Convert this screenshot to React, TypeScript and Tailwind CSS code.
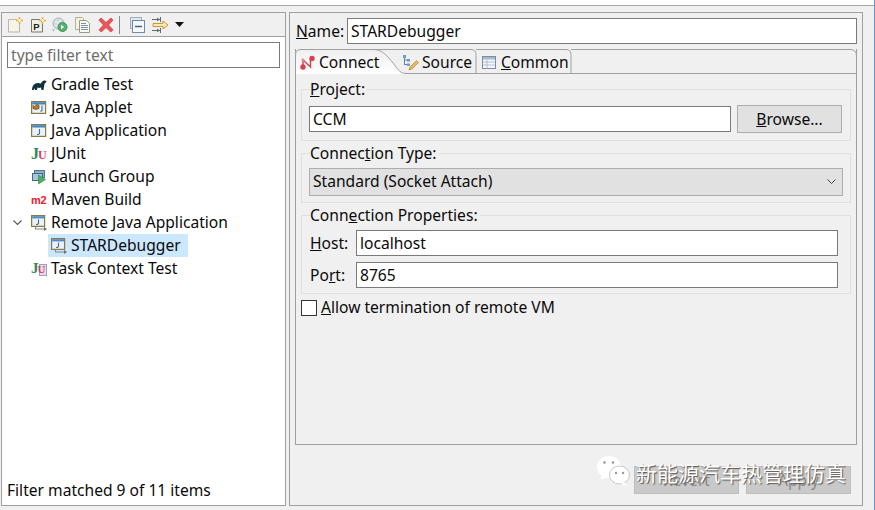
import React from 'react';

const Ico: React.FC<{ children: React.ReactNode; className?: string }> = ({ children, className }) => (
  <svg width="16" height="16" viewBox="0 0 16 16" fill="none" className={`shrink-0 ${className ?? ''}`}>
    {children}
  </svg>
);

const NewConfig = () => (
  <Ico>
    <path d="M0.500 2.500h8l3 3v9.500h-11z" fill="#f6f4e8" stroke="#b9b8a0" />
    <path d="M11.500 0v7M8 3.500h7" stroke="#e0b040" strokeWidth="1.600" />
    <path d="M11.500 2v3M10 3.500h3" stroke="#fff6d0" />
  </Ico>
);
const NewProto = () => (
  <Ico>
    <path d="M0.500 2.500h8l3 3v9.500h-11z" fill="#f0efe4" stroke="#77776a" />
    <text x="2.200" y="13" fontSize="9.500" fontWeight="700" fill="#222" fontFamily="Liberation Sans">P</text>
    <path d="M11.500 0v7M8 3.500h7" stroke="#e0b040" strokeWidth="1.600" />
    <path d="M11.500 2v3M10 3.500h3" stroke="#fff6d0" />
  </Ico>
);
const ExportCfg = () => (
  <Ico>
    <circle cx="6.500" cy="6.500" r="5.500" fill="#d4dce2" stroke="#a8b2b8" />
    <path d="M3 4l3 2 3-3M3 9l4-1 3 2" stroke="#f2f4f6" />
    <circle cx="10.500" cy="10" r="4.500" fill="#58b070" stroke="#3e9458" />
    <path d="M9 8v4.200l3.200-2.100z" fill="#fff" />
    <path d="M0 12h3l-1.500 3z" fill="#b4c2cc" />
  </Ico>
);
const Duplicate = () => (
  <Ico>
    <path d="M0.500 0.500h7l1 1v11h-8z" fill="#f6f2dc" stroke="#b4b094" />
    <path d="M4.500 3.500h7l3 3v9h-10z" fill="#fbfaf0" stroke="#9a9a86" />
    <path d="M6 6.500h5M6 8.500h7M6 10.500h7M6 12.500h7" stroke="#7a94ae" />
  </Ico>
);
const RedX = () => (
  <Ico>
    <path d="M3 1l5 4.500L13 1l2 2.200-4.500 4.800 4.500 4.800L12.800 15 8 10.500 3.200 15 1 12.800 5.500 8 1 3.200z" fill="#e8555a" stroke="#cf3f44" strokeWidth="0.800" />
  </Ico>
);
const Collapse = () => (
  <Ico>
    <rect x="0.500" y="0.500" width="11" height="11" fill="#dfe8f0" stroke="#9cb0c2" />
    <rect x="2.500" y="3.500" width="12" height="12" fill="#f4f8fb" stroke="#6e8aa4" />
    <path d="M5 9.500h7" stroke="#2f5f8a" strokeWidth="1.400" />
  </Ico>
);
const FilterArrow = () => (
  <svg width="17" height="16" viewBox="0 0 17 16" fill="none" className="shrink-0">
    <path d="M0 2.500h8M0 13.500h8M8.500 0v5M8.500 11v5" stroke="#5c6a72" />
    <path d="M5 1l2 1.500-2 1.500M5 12l2 1.500-2 1.500" stroke="#5c6a72" />
    <path d="M1 6.500h10V4l5 4-5 4V9.500H1z" fill="#fbe9b4" stroke="#c8983e" />
  </svg>
);

const GradleIcon = () => (
  <Ico>
    <path d="M1 13c0-4 2-7 6-7 1 0 2 .5 3 .5 1-2.500 3-3.500 5-2.500 1 .5 0 2-1 2-1 2-1 4-1.500 7h-2l-.5-2.500c-1 .5-2.500.5-3.500 0L6 13H4l-.5-2L2.800 13z" fill="#11343c" />
  </Ico>
);
const WindowIcon: React.FC<{ applet?: boolean }> = ({ applet }) => (
  <Ico>
    <rect x="0.600" y="1.600" width="14" height="11.800" fill="#eaf1f7" stroke="#8a7a48" strokeWidth="1.200" />
    <rect x="1.200" y="2.200" width="12.800" height="2.300" fill="#3f86c6" />
    {applet ? (
      <>
        <path d="M2 5.500c1 1.200 1.500 1.200 2.500 0s1.500-1.200 3.500 0v3c-2 1-4 1-6 0z" fill="#c07c24" stroke="#6e4410" strokeWidth="0.800" />
        <path d="M11 5.500v5l-1.500 1" stroke="#3f6e96" strokeWidth="1.100" />
      </>
    ) : (
      <path d="M8.500 6v4.500l-1 1H6" stroke="#3f6e96" strokeWidth="1.100" />
    )}
  </Ico>
);
const JUnitIcon = () => (
  <Ico>
    <text x="0" y="13" fontSize="16" fontWeight="700" fill="#2e8b57" fontFamily="Liberation Serif">J</text>
    <text x="7" y="13" fontSize="12" fontWeight="700" fill="#d8405a" fontFamily="Liberation Serif">U</text>
  </Ico>
);
const LaunchIcon = () => (
  <Ico>
    <rect x="3.500" y="1.500" width="10" height="7" fill="#8fb0c8" stroke="#4a7394" />
    <rect x="1.500" y="4.500" width="10" height="7" fill="#a9c4d8" stroke="#3f6a8c" />
    <path d="M7.500 6v9l7-4.500z" fill="#4fae62" stroke="#2f8a48" strokeWidth="0.600" />
  </Ico>
);
const MavenIcon = () => (
  <Ico>
    <text x="0" y="11.500" fontSize="11" fontWeight="700" fill="#ee2028" fontFamily="Liberation Sans" letterSpacing="-0.300">m2</text>
  </Ico>
);
const RemoteIcon = () => (
  <Ico>
    <rect x="0.600" y="0.600" width="13" height="10.800" fill="#eaf1f7" stroke="#8a7a48" strokeWidth="1.200" />
    <rect x="1.200" y="1.200" width="11.800" height="2.200" fill="#4d8cc6" />
    <path d="M7.500 4.500v4l-1 1H5" stroke="#3f6e96" strokeWidth="1.100" />
    <path d="M4.500 11.500v2.500h9" stroke="#8a8a7e" strokeWidth="1.200" />
    <path d="M13 12l3 2-3 2z" fill="#6e6e68" />
  </Ico>
);
const TaskIcon = () => (
  <Ico>
    <rect x="8.500" y="3.500" width="7" height="11" fill="#e2deee" stroke="#a59cc4" />
    <text x="0" y="12" fontSize="15" fontWeight="700" fill="#2e8b57" fontFamily="Liberation Serif">J</text>
    <text x="6.500" y="12" fontSize="11" fontWeight="700" fill="#d8405a" fontFamily="Liberation Serif">U</text>
  </Ico>
);

const ConnectIcon = () => (
  <Ico>
    <path d="M3 12V5l7.500 7V4" stroke="#c4525e" strokeWidth="1.500" />
    <circle cx="3" cy="12" r="2.700" fill="#d9404f" />
    <circle cx="12" cy="3.500" r="2.700" fill="#d9404f" />
    <circle cx="3" cy="5" r="1.600" fill="#e58d95" />
  </Ico>
);
const SourceIcon = () => (
  <Ico>
    <path d="M1.500 1v9M1.500 5h3M1.500 9.500h3" stroke="#5a86ac" />
    <rect x="0" y="0" width="3" height="3" fill="#6f9cc4" />
    <rect x="4" y="4" width="3" height="2.500" fill="#6f9cc4" />
    <rect x="4" y="8.500" width="3" height="2.500" fill="#6f9cc4" />
    <path d="M6 15l1-3 6.500-6.500 2 2L9 14z" fill="#e8b860" stroke="#b8862e" strokeWidth="0.700" />
  </Ico>
);
const CommonIcon = () => (
  <Ico>
    <rect x="0.500" y="1.500" width="13" height="12" fill="#f5f7fa" stroke="#7c8ca0" />
    <rect x="1" y="2" width="12" height="2.500" fill="#a8b8cc" />
    <path d="M1 7h12M1 10h12M5 4.500v9" stroke="#b4c0d0" />
  </Ico>
);

const WeChat = () => (
  <svg width="34" height="32" viewBox="0 0 34 32" className="shrink-0">
    <ellipse cx="13" cy="12" rx="12" ry="11" fill="#fff" />
    <path d="M6 19l-1 6 6-3z" fill="#fff" />
    <ellipse cx="23.500" cy="20" rx="10" ry="9" fill="#fff" stroke="#bbb" strokeWidth="0.800" />
    <path d="M28 27l3 4-6-2z" fill="#fff" />
    <circle cx="8.500" cy="7.500" r="1.300" fill="#999" />
    <circle cx="17" cy="7.500" r="1.300" fill="#999" />
    <circle cx="20" cy="18" r="1.200" fill="#999" />
    <circle cx="27" cy="18" r="1.200" fill="#999" />
  </svg>
);

const TreeRow: React.FC<{ icon: React.ReactNode; label: string; chevron?: boolean }> = ({ icon, label, chevron }) => (
  <div className="h-[23px] flex items-center">
    <div className="w-[29px] shrink-0 flex justify-end pr-[9px]">
      {chevron && (
        <svg width="9" height="6" viewBox="0 0 9 6" fill="none">
          <path d="M0.500 0.500l4 4 4-4" stroke="#555" strokeWidth="1.100" />
        </svg>
      )}
    </div>
    {icon}
    <span className="ml-[4px]">{label}</span>
  </div>
);

const Field: React.FC<{ value: string; className?: string }> = ({ value, className }) => (
  <div className={`h-[26px] border border-[#7a7a7a] bg-white flex items-center pl-[3px] pt-[2px] ${className ?? ''}`}>{value}</div>
);

const Group: React.FC<{ legend: React.ReactNode; className: string; children: React.ReactNode }> = ({ legend, className, children }) => (
  <fieldset className={`border border-[#e0e0e0] pl-[7px] ${className}`}>
    <legend className="ml-px pr-[2px] h-[20px] leading-[20px]">{legend}</legend>
    {children}
  </fieldset>
);

const App: React.FC = () => {
  return (
    <div
      className="relative w-[875px] h-[510px] overflow-hidden bg-[#f0f0f0] text-[15.6px] text-[#0a0a0a]"
      style={{ fontFamily: '"Noto Sans", "Noto Sans CJK SC", sans-serif' }}
    >
      <div className="absolute right-0 top-0 bottom-0 w-px bg-[#6d94cc]" />
      <div className="h-[6px] bg-white border-b border-[#a8a8a8]" />
      <div className="flex pt-[6px] pl-[1px]">
        {/* left: launch configuration tree */}
        <div className="w-[285px] h-[494px] border border-[#a0a0a0] bg-white flex flex-col">
          <div className="h-[24px] bg-[#f0f0f0] border-b border-[#a0a0a0] flex items-center pl-[6px] shrink-0">
            <NewConfig />
            <div className="ml-[7px]"><NewProto /></div>
            <div className="ml-[5px]"><ExportCfg /></div>
            <div className="ml-[7px]"><Duplicate /></div>
            <div className="ml-[7px]"><RedX /></div>
            <div className="ml-[5px] w-px h-[18px] bg-[#8a8a8a]" />
            <div className="ml-[10px]"><Collapse /></div>
            <div className="ml-[6px]"><FilterArrow /></div>
            <svg width="10" height="6" viewBox="0 0 10 6" className="ml-[6px]"><path d="M0 0h9l-4.500 5z" fill="#111" /></svg>
          </div>
          <div className="mx-[5px] mt-[5px] h-[26px] border border-[#7a7a7a] flex items-center pl-[3px] pt-[2px] text-[#6d6d6d] shrink-0">
            type filter text
          </div>
          <div className="mt-[5px] flex-1">
            <TreeRow icon={<GradleIcon />} label="Gradle Test" />
            <TreeRow icon={<WindowIcon applet />} label="Java Applet" />
            <TreeRow icon={<WindowIcon />} label="Java Application" />
            <TreeRow icon={<JUnitIcon />} label="JUnit" />
            <TreeRow icon={<LaunchIcon />} label="Launch Group" />
            <TreeRow icon={<MavenIcon />} label="Maven Build" />
            <TreeRow icon={<RemoteIcon />} label="Remote Java Application" chevron />
            <div className="h-[23px] ml-[46px] w-[140px] bg-[#cce8ff] flex items-center pl-[3px]">
              <RemoteIcon />
              <span className="ml-[4px]">STARDebugger</span>
            </div>
            <TreeRow icon={<TaskIcon />} label="Task Context Test" />
          </div>
          <div className="pl-[5px] h-[28px] flex items-center shrink-0">Filter matched 9 of 11 items</div>
        </div>

        {/* right: configuration editor */}
        <div className="ml-[3px] w-[574px] h-[494px] border border-[#a0a0a0] bg-[#f0f0f0] pl-[5px] flex flex-col">
          <div className="mt-[5px] h-[26px] flex items-center shrink-0">
            <span className="w-[52px] pl-[1px] pt-[2px]"><u>N</u>ame:</span>
            <Field value="STARDebugger" className="w-[510px]" />
          </div>
          <div className="mt-[5px] w-[562px] h-[396px] border border-t-0 border-[#a0a0a0] flex flex-col shrink-0">
            {/* tab strip */}
            <div className="h-[25px] -mx-px relative shrink-0">
              <svg width="562" height="25" viewBox="0 0 562 25" fill="none" className="absolute inset-0">
                <defs>
                  <linearGradient id="tabFill" x1="0" y1="0" x2="0" y2="1">
                    <stop offset="0" stopColor="#efefef" />
                    <stop offset="1" stopColor="#ffffff" />
                  </linearGradient>
                </defs>
                <path d="M0.500 25V6q0-5.500 5.500-5.500h72c8 0 12 4 18 11s8 13 15 13V25z" fill="url(#tabFill)" />
                <path d="M0.500 25V6q0-5.500 5.500-5.500h72c8 0 12 4 18 11s8 13 15 13" stroke="#a0a0a0" />
                <path d="M78 0.500h98q5 0 5 5V24.500M181 0.500h90q5 0 5 5V24.500" stroke="#a0a0a0" />
                <path d="M276 0.500h279q6.500 0 6.500 6.500V25" stroke="#a0a0a0" />
                <path d="M111 24.500H562" stroke="#a0a0a0" />
              </svg>
              <div className="absolute left-[5px] top-[3px] flex items-center h-[21px]"><ConnectIcon /><span className="ml-[3px]">Connect</span></div>
              <div className="absolute left-[108px] top-[3px] flex items-center h-[21px]"><SourceIcon /><span className="ml-[3px]">Source</span></div>
              <div className="absolute left-[187px] top-[3px] flex items-center h-[21px]"><CommonIcon /><span className="ml-[3px]"><u>C</u>ommon</span></div>
            </div>
            <div className="px-[5px] pt-[5px]">
              <Group legend={<><u>P</u>roject:</>} className="h-[62px]">
                <div className="pt-[6px] flex items-center">
                  <Field value="CCM" className="w-[422px]" />
                  <div className="ml-[6px] w-[105px] h-[28px] bg-[#e1e1e1] border border-[#adadad] flex items-center justify-center pt-[2px]">
                    <span><u>B</u>rowse...</span>
                  </div>
                </div>
              </Group>
              <Group legend={<>Connec<u>t</u>ion Type:</>} className="mt-[2px] h-[60px]">
                <div className="pt-[5px]">
                  <div className="w-[534px] h-[28px] bg-[#e1e1e1] border border-[#adadad] flex items-center justify-between pl-[3px] pr-[6px]">
                    <span>Standard (Socket Attach)</span>
                    <svg width="9" height="6" viewBox="0 0 9 6" fill="none"><path d="M0.500 0.500l4 4 4-4" stroke="#444" /></svg>
                  </div>
                </div>
              </Group>
              <Group legend={<>Conn<u>e</u>ction Properties:</>} className="mt-[2px] h-[89px]">
                <div className="pt-[5px] flex flex-col gap-[6px]">
                  <div className="flex items-center">
                    <span className="w-[47px] pt-[2px] pl-px"><u>H</u>ost:</span>
                    <Field value="localhost" className="w-[482px]" />
                  </div>
                  <div className="flex items-center">
                    <span className="w-[47px] pt-[2px] pl-px">Po<u>r</u>t:</span>
                    <Field value="8765" className="w-[482px]" />
                  </div>
                </div>
              </Group>
              <div className="mt-[2px] flex items-center">
                <div className="w-[16px] h-[16px] bg-white border border-[#333]" />
                <span className="ml-[4px]"><u>A</u>llow termination of remote VM</span>
              </div>
            </div>
          </div>
          <div className="mt-[21px] flex justify-end gap-[7px] pr-[11px] text-[#8a8a8a] shrink-0">
            <div className="w-[105px] h-[28px] bg-[#c9c9c9] border border-[#bdbdbd] flex items-center justify-center pt-[2px]">Revert</div>
            <div className="w-[105px] h-[28px] bg-[#c9c9c9] border border-[#bdbdbd] flex items-center justify-center pt-[2px]">Apply</div>
          </div>
        </div>
      </div>

      {/* watermark */}
      <div className="absolute left-[596px] top-[454px] flex items-center text-white text-[21px] leading-[30px] [text-shadow:1px_1px_1px_#555]">
        <WeChat />
        <span className="ml-[6px] mt-[4px]">新能源汽车热管理仿真</span>
      </div>
    </div>
  );
};

export default App;
